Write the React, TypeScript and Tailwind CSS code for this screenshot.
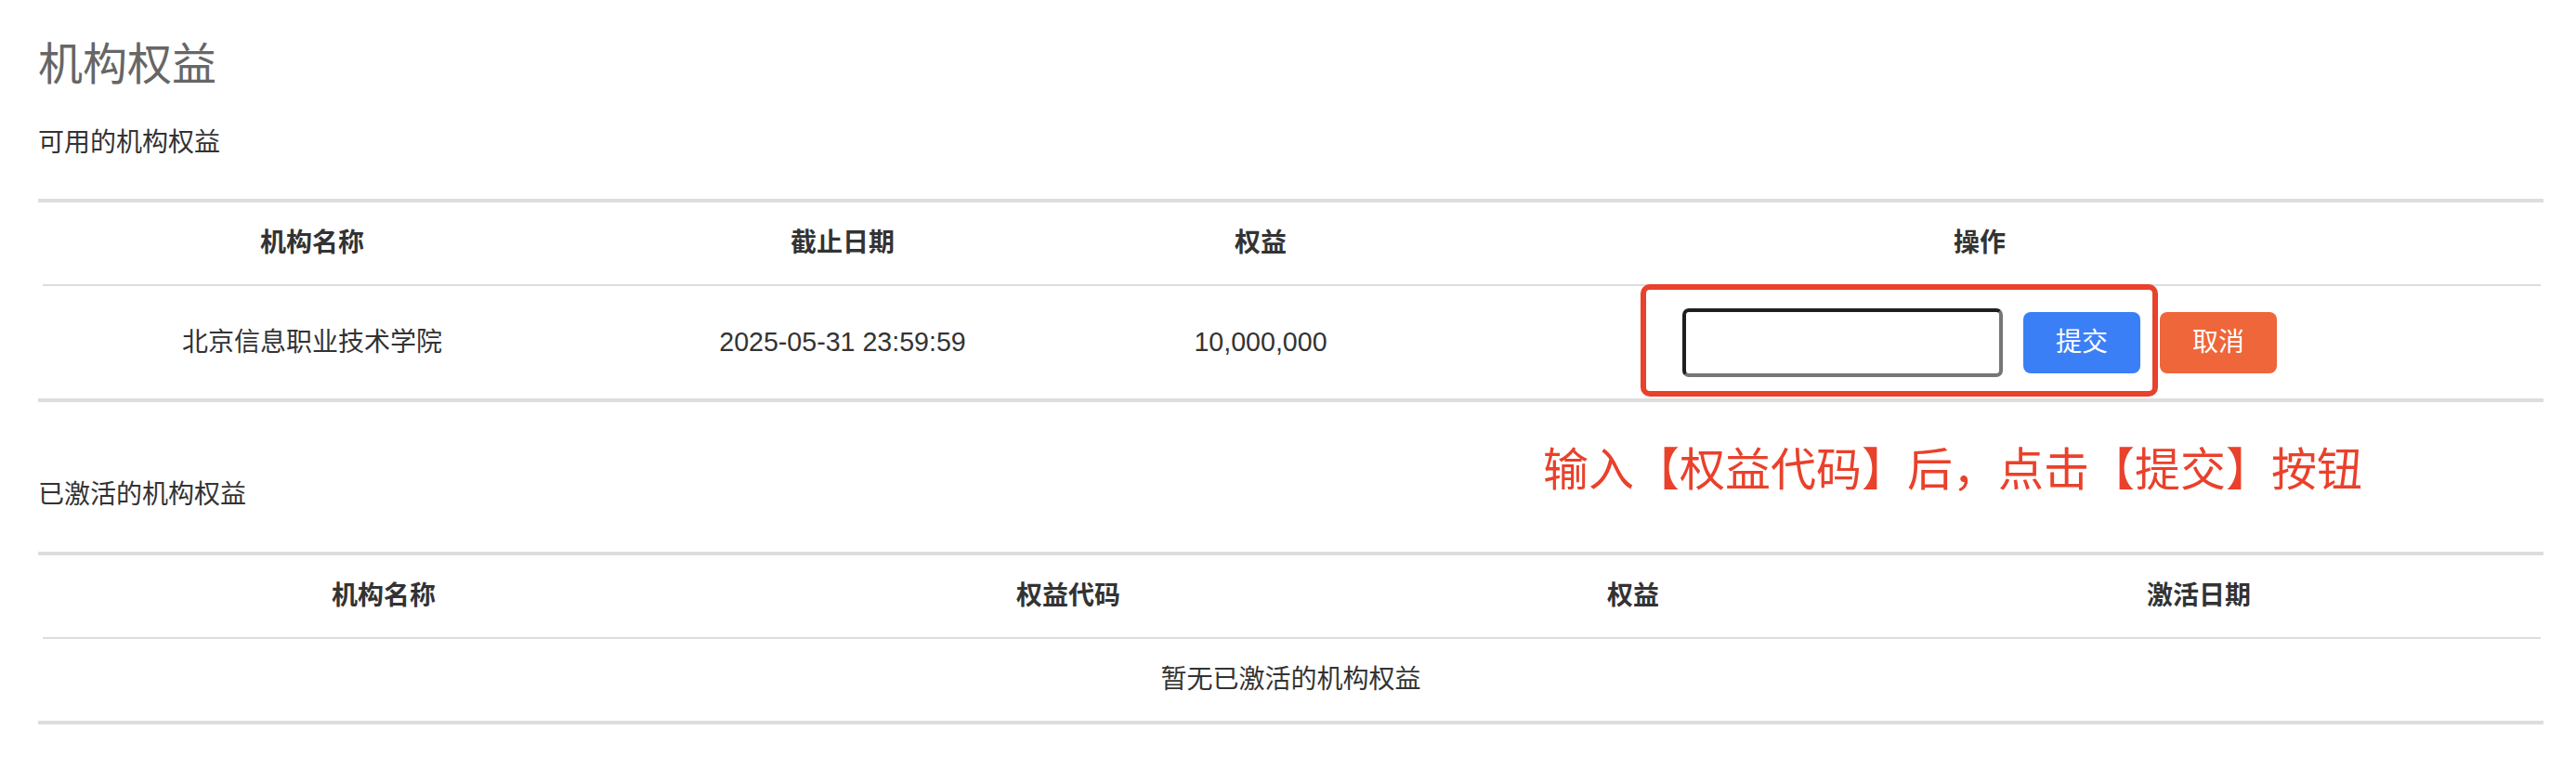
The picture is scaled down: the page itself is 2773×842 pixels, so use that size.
import React from "react";

const font = "font-['Liberation_Sans','Noto_Sans_CJK_SC',sans-serif]";

export default function App() {
  return (
    <div className={`${font} min-h-[842px] bg-white pl-[41px] pt-[46px] text-[#333]`}>
      <h1 className="text-[48px] font-normal leading-none text-[#666]">机构权益</h1>
      <p className="mt-[46px] text-[28px] leading-none">可用的机构权益</p>

      {/* Available */}
      <div className="mt-[46px] w-[2697px] border-y-4 border-[#ddd]">
        <div className="grid h-[88px] grid-cols-[590px_552px_348px_1200px] items-center text-center text-[28px] font-bold leading-none">
          <div>机构名称</div>
          <div>截止日期</div>
          <div>权益</div>
          <div>操作</div>
        </div>
        <div className="ml-[5px] mr-[3px] h-[2px] bg-[#ddd]" />
        <div className="grid h-[121px] grid-cols-[590px_552px_348px_1200px] items-center text-center text-[28px] leading-none">
          <div>北京信息职业技术学院</div>
          <div className="text-[28.6px]">2025-05-31 23:59:59</div>
          <div className="text-[28.6px]">10,000,000</div>
          <div className="flex items-center justify-center">
            <div className="relative flex items-center">
              <input
                type="text"
                className="h-[74px] w-[345px] rounded-[7px] border-4 border-b-[#767676] border-l-[#1f1f1f] border-r-[#767676] border-t-[#1f1f1f] bg-white outline-none"
              />
              <button className="ml-[22px] h-[66px] w-[126px] rounded-[8px] bg-[#3b7ff6] text-[28px] leading-none text-white">
                提交
              </button>
              {/* annotation box */}
              <div className="pointer-events-none absolute -bottom-[21px] -left-[45px] -right-[19px] -top-[26px] rounded-[10px] border-[6px] border-[#e9412b]" />
            </div>
            <button className="ml-[21px] h-[66px] w-[126px] rounded-[8px] bg-[#ee6639] text-[28px] leading-none text-white">
              取消
            </button>
          </div>
        </div>
      </div>

      {/* Activated */}
      <div className="relative h-[161px] w-[2697px]">
        <p className="pt-[86px] text-[28px] leading-none">已激活的机构权益</p>
        <p className="absolute left-[1620px] top-[49px] whitespace-nowrap text-[49px] leading-none text-[#e9412b]">
          输入【权益代码】后，点击【提交】按钮
        </p>
      </div>

      <div className="w-[2697px] border-y-4 border-[#ddd]">
        <div className="grid h-[88px] grid-cols-[744px_730px_486px_732px] items-center text-center text-[28px] font-bold leading-none">
          <div>机构名称</div>
          <div>权益代码</div>
          <div>权益</div>
          <div>激活日期</div>
        </div>
        <div className="ml-[5px] mr-[3px] h-[2px] bg-[#ddd]" />
        <div className="flex h-[88px] items-center justify-center text-[28px] leading-none">
          暂无已激活的机构权益
        </div>
      </div>
    </div>
  );
}
